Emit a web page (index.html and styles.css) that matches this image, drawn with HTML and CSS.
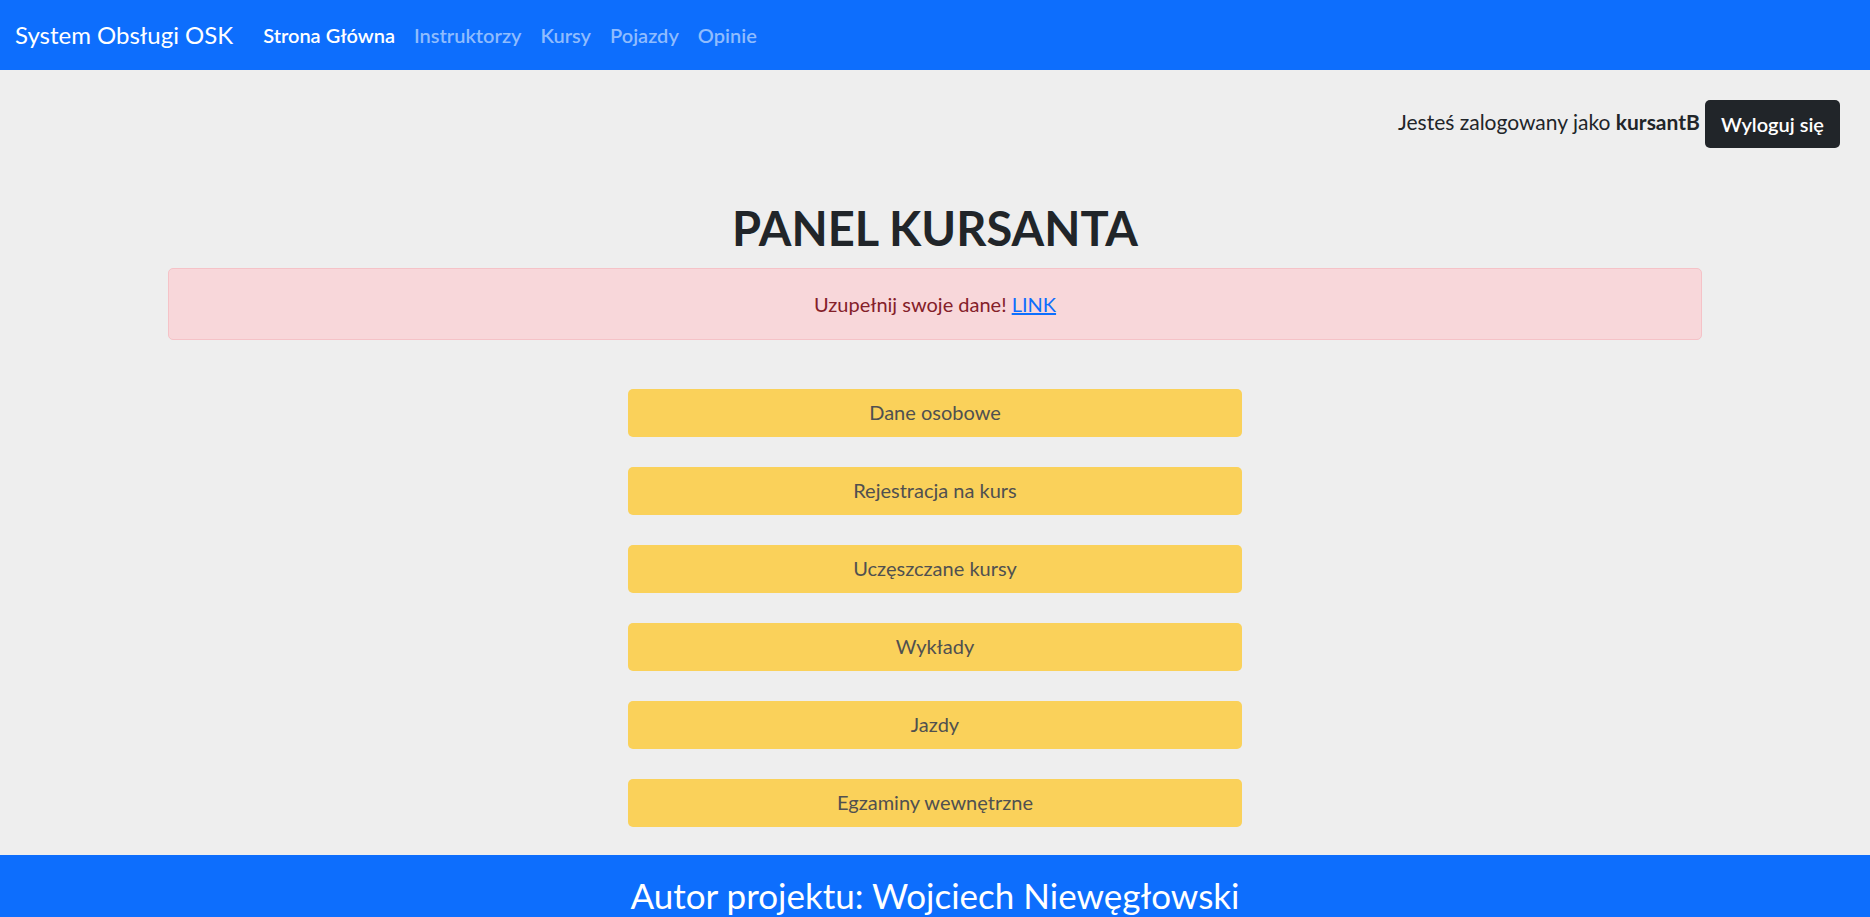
FILE: index.html
```html
<!DOCTYPE html>
<html lang="pl">
<head>
<meta charset="utf-8">
<meta name="viewport" content="width=device-width, initial-scale=1">
<title>System Obsługi OSK</title>
<link rel="stylesheet" href="styles.css">
</head>
<body>
<header class="navbar">
  <a class="brand" href="#">System Obsługi OSK</a>
  <nav class="menu">
    <a class="menu-link active" href="#">Strona Główna</a>
    <a class="menu-link" href="#">Instruktorzy</a>
    <a class="menu-link" href="#">Kursy</a>
    <a class="menu-link" href="#">Pojazdy</a>
    <a class="menu-link" href="#">Opinie</a>
  </nav>
</header>
<div class="session">
  <span class="session-user">Jesteś zalogowany jako <b>kursantB</b></span>
  <button class="logout" type="button">Wyloguj się</button>
</div>
<main class="panel">
  <h1 class="title">PANEL KURSANTA</h1>
  <div class="alert" role="alert">Uzupełnij swoje dane! <a class="alert-link" href="#">LINK</a></div>
  <div class="actions">
    <button class="action" type="button">Dane osobowe</button>
    <button class="action" type="button">Rejestracja na kurs</button>
    <button class="action" type="button">Uczęszczane kursy</button>
    <button class="action" type="button">Wykłady</button>
    <button class="action" type="button">Jazdy</button>
    <button class="action" type="button">Egzaminy wewnętrzne</button>
  </div>
</main>
<footer class="footer">Autor projektu: Wojciech Niewęgłowski</footer>
</body>
</html>
```
FILE: styles.css
```css
* {
  box-sizing: border-box;
}

body {
  margin: 0;
  background: #eeeeee;
  color: #212529;
  font-family: "Trebuchet MS", Lato, sans-serif;
  font-size: 20px;
  line-height: 30px;
}

button {
  font: inherit;
  border: 0;
  border-radius: 5px;
  padding: 9px 16px;
  cursor: pointer;
}

.navbar {
  display: flex;
  align-items: center;
  gap: 30px;
  padding: 20px 15px;
  background: #0d6efd;
}

.brand {
  color: #ffffff;
  font-size: 24px;
  text-decoration: none;
}

.menu {
  display: flex;
  gap: 19px;
}

.menu-link {
  color: #8fbcfe;
  font-weight: 600;
  text-decoration: none;
}

.menu-link.active {
  color: #ffffff;
}

.session {
  display: flex;
  justify-content: flex-end;
  align-items: flex-start;
  gap: 5px;
  padding: 30px 30px 0;
}

.session-user {
  padding: 7px 0;
  font-size: 21px;
}

.logout {
  background: #212529;
  color: #ffffff;
  font-weight: 600;
}

.panel {
  width: 82%;
  margin: 0 auto;
  padding: 50px 0 28px;
}

.title {
  margin: 0 0 10px;
  font-size: 47px;
  font-weight: 700;
  line-height: 60px;
  text-align: center;
}

.alert {
  padding: 20px;
  border: 1px solid #f5c2c7;
  border-radius: 5px;
  background: #f8d7da;
  color: #842029;
  text-align: center;
}

.alert-link {
  color: #0d6efd;
}

.actions {
  display: grid;
  gap: 30px;
  width: 40%;
  margin: 49px auto 0;
}

.action {
  padding: 8px 16px 10px;
  background: #fad15a;
  color: #505050;
}

.footer {
  padding: 19px 0 1px;
  background: #0d6efd;
  color: #ffffff;
  font-size: 35px;
  line-height: 42px;
  text-align: center;
}
```
